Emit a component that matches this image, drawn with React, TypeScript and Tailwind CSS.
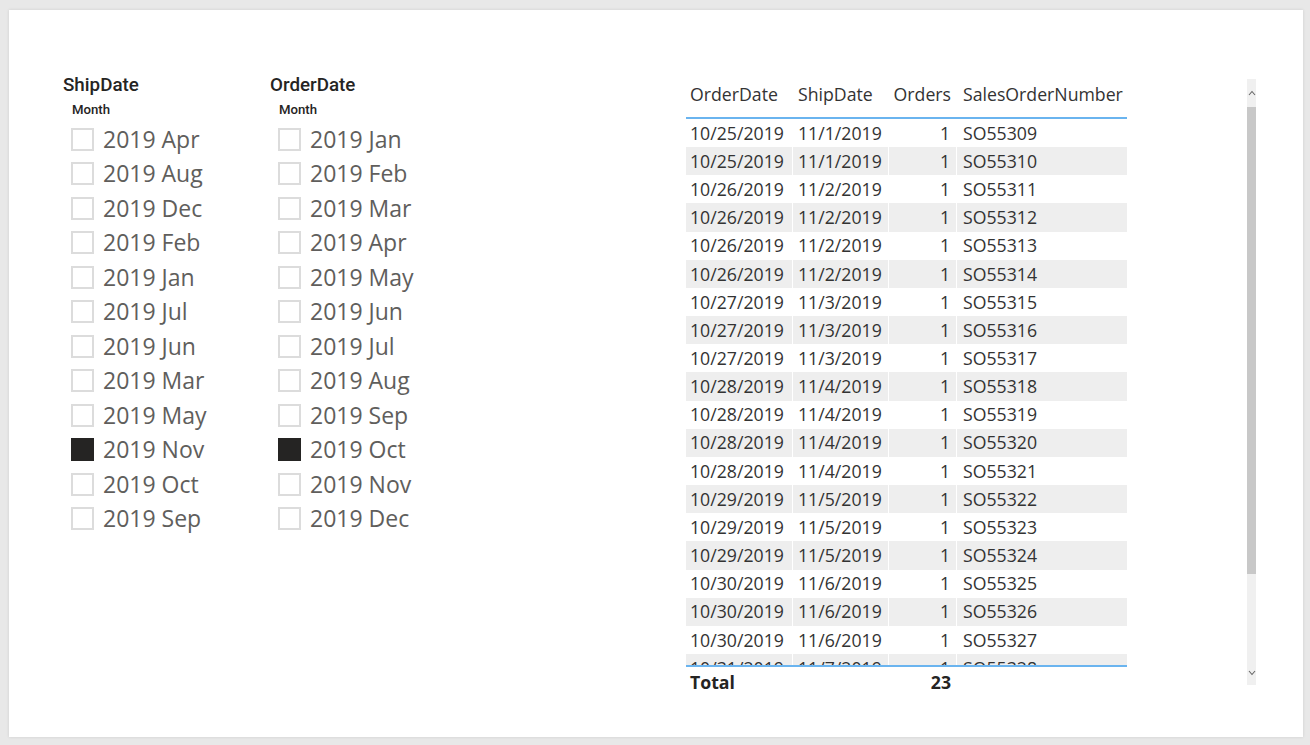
const shipMonths = ["Apr", "Aug", "Dec", "Feb", "Jan", "Jul", "Jun", "Mar", "May", "Nov", "Oct", "Sep"];
const orderMonths = ["Jan", "Feb", "Mar", "Apr", "May", "Jun", "Jul", "Aug", "Sep", "Oct", "Nov", "Dec"];

const rows: [string, string, string][] = [
  ["10/25/2019", "11/1/2019", "SO55309"],
  ["10/25/2019", "11/1/2019", "SO55310"],
  ["10/26/2019", "11/2/2019", "SO55311"],
  ["10/26/2019", "11/2/2019", "SO55312"],
  ["10/26/2019", "11/2/2019", "SO55313"],
  ["10/26/2019", "11/2/2019", "SO55314"],
  ["10/27/2019", "11/3/2019", "SO55315"],
  ["10/27/2019", "11/3/2019", "SO55316"],
  ["10/27/2019", "11/3/2019", "SO55317"],
  ["10/28/2019", "11/4/2019", "SO55318"],
  ["10/28/2019", "11/4/2019", "SO55319"],
  ["10/28/2019", "11/4/2019", "SO55320"],
  ["10/28/2019", "11/4/2019", "SO55321"],
  ["10/29/2019", "11/5/2019", "SO55322"],
  ["10/29/2019", "11/5/2019", "SO55323"],
  ["10/29/2019", "11/5/2019", "SO55324"],
  ["10/30/2019", "11/6/2019", "SO55325"],
  ["10/30/2019", "11/6/2019", "SO55326"],
  ["10/30/2019", "11/6/2019", "SO55327"],
  ["10/31/2019", "11/7/2019", "SO55328"],
  ["10/31/2019", "11/7/2019", "SO55329"],
  ["10/31/2019", "11/7/2019", "SO55330"],
  ["11/1/2019", "11/8/2019", "SO55331"],
];

function Slicer({ title, months, checked, width }: { title: string; months: string[]; checked: string; width: string }) {
  return (
    <div className={`${width} shrink-0 pt-[63px]`}>
      <div className="h-[24px] text-[18.8px] font-medium leading-[24px] text-[#252423] [font-family:Roboto,sans-serif]">
        {title}
      </div>
      <div className="ml-[9px] mt-[5px] h-[16px] text-[13.2px] font-medium leading-[16px] text-[#252423] [font-family:Roboto,sans-serif]">
        Month
      </div>
      <div className="ml-[8px] mt-[4px] flex flex-col">
        {months.map((m) => (
          <div key={m} className="flex h-[34.5px] items-center gap-[9px]">
            <div
              className={
                m === checked
                  ? "h-[23px] w-[23px] border border-[#252423] bg-[#252423]"
                  : "h-[23px] w-[23px] border-2 border-[#dcdcdc] bg-white"
              }
            />
            <span className="text-[23px] leading-none text-[#605e5c] [font-family:'Open_Sans',sans-serif]">
              2019 {m}
            </span>
          </div>
        ))}
      </div>
    </div>
  );
}

function Chevron({ up }: { up?: boolean }) {
  return (
    <svg width="8" height="6" viewBox="0 0 8 6" className="text-[#666]">
      <path d={up ? "M1 5 L4 1.5 L7 5" : "M1 1 L4 4.5 L7 1"} fill="none" stroke="currentColor" strokeWidth="1.1" />
    </svg>
  );
}

export default function App() {
  return (
    <div className="h-[745px] w-[1310px] bg-[#e8e8e8] pl-[9px] pt-[10px]">
      <div className="flex h-[727px] w-[1294px] items-start bg-white shadow-[0_0_3px_rgba(0,0,0,0.12)]">
        <div className="w-[54px] shrink-0" />
        <Slicer title="ShipDate" months={shipMonths} checked="Nov" width="w-[207px]" />
        <Slicer title="OrderDate" months={orderMonths} checked="Oct" width="w-[416px]" />

        <div className="w-[441px] shrink-0 pt-[69px] text-[17.7px] text-[#333] [font-family:'Open_Sans',sans-serif]">
          <div className="flex h-[40px] items-start border-b-2 border-[#6ab4ef] pt-[4px] leading-[22px]">
            <div className="w-[107px] pl-[4px]">OrderDate</div>
            <div className="w-[96px] pl-[5px]">ShipDate</div>
            <div className="w-[68px] pr-[6px] text-right">Orders</div>
            <div className="flex-1 pl-[6px]">SalesOrderNumber</div>
          </div>
          <div className="h-[548px] overflow-hidden border-b-2 border-[#6ab4ef]">
            {rows.map((r, i) => (
              <div
                key={r[2]}
                className={`flex h-[28.17px] items-center leading-none ${i % 2 === 1 ? "bg-[#eeeeee]" : "bg-white"}`}
              >
                <div className="flex h-full w-[107px] items-center border-r border-white pl-[4px] pt-[1px]">{r[0]}</div>
                <div className="flex h-full w-[96px] items-center border-r border-white pl-[5px] pt-[1px]">{r[1]}</div>
                <div className="flex h-full w-[68px] items-center justify-end border-r border-white pr-[6px] pt-[1px]">1</div>
                <div className="flex h-full flex-1 items-center pl-[6px] pt-[1px]">{r[2]}</div>
              </div>
            ))}
          </div>
          <div className="flex h-[30px] items-center pt-[1px] font-bold text-[#252423]">
            <div className="w-[107px] pl-[4px]">Total</div>
            <div className="w-[96px]" />
            <div className="w-[68px] pr-[6px] text-right">23</div>
          </div>
        </div>

        <div className="ml-[120px] mt-[69px] flex h-[606px] w-[9px] shrink-0 flex-col bg-[#f0f0f0]">
          <div className="flex h-[28px] items-center justify-center">
            <Chevron up />
          </div>
          <div className="h-[467px] bg-[#c8c8c8]" />
          <div className="flex flex-1 items-end justify-center pb-[9px]">
            <Chevron />
          </div>
        </div>
      </div>
    </div>
  );
}
